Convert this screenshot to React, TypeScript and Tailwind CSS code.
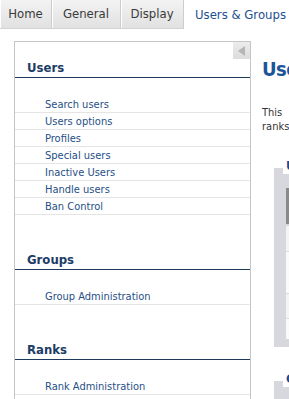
import React from "react";

const FONT = "font-['DejaVu_Sans_Condensed','DejaVu_Sans',sans-serif] font-stretch-condensed";

function Section({ title, items, first }: { title: string; items: string[]; first?: boolean }) {
  return (
    <div className={first ? "" : "mt-[19px]"}>
      <div className="pl-[12px] pt-[18px] pb-[1px] leading-[16px] border-b border-[#1e3a5a] text-[13px] font-bold text-[#1d3c66]">
        {title}
      </div>
      <div className="mt-[18px]">
        {items.map((it) => (
          <div
            key={it}
            className="h-[17px] border-b border-[#e4e4e4] pl-[30px] pt-[2px] leading-[14px] text-[11px] text-[#1f4f86]"
          >
            {it}
          </div>
        ))}
      </div>
    </div>
  );
}

function Tab({ label, w }: { label: string; w: string }) {
  return (
    <div
      className={`${w} h-[29px] shrink-0 flex items-center justify-center border-r border-[#cdcdcd] border-b border-b-[#d2d2d2] bg-gradient-to-b from-[#f3f3f3] to-[#e1e1e1] text-[13px] text-[#3a3a3a] shadow-[inset_1px_0_0_#ffffff]`}
    >
      {label}
    </div>
  );
}

function FieldBox({ legend, children, className }: { legend: string; children?: React.ReactNode; className?: string }) {
  return (
    <div className={`flex flex-col ${className ?? ""}`}>
      <div className="ml-[9px] self-start relative z-10 bg-white px-[3px] text-[13px] font-bold leading-[16px] text-[#1d4a8a] whitespace-nowrap">
        {legend}
      </div>
      <div className="-mt-[6px] bg-[#d6d8dd] pl-[12px] pb-[8px]">{children}</div>
    </div>
  );
}

export default function App() {
  return (
    <div className={`w-[289px] h-[399px] overflow-hidden bg-white ${FONT}`}>
      <div className="flex h-[29px]">
        <Tab label="Home" w="w-[52px]" />
        <Tab label="General" w="w-[69px]" />
        <Tab label="Display" w="w-[63px]" />
        <div className="h-[29px] pl-[11px] flex items-center bg-white text-[13px] text-[#1d4f91] whitespace-nowrap w-[120px] shrink-0">
          Users &amp; Groups
        </div>
      </div>
      <div className="flex">
        <div className="ml-[14px] mt-[12px] w-[237px] shrink-0 border border-[#c6c6c6] relative pb-[40px]">
          <div className="absolute top-0 right-0 w-[17px] h-[17px] bg-gradient-to-b from-[#ececec] to-[#dcdcdc] flex items-center justify-center">
            <svg width="8" height="10" viewBox="0 0 8 10">
              <polygon points="7,0 7,10 0,5" fill="#b5b5b5" />
            </svg>
          </div>
          <Section
            first
            title="Users"
            items={["Search users", "Users options", "Profiles", "Special users", "Inactive Users", "Handle users", "Ban Control"]}
          />
          <Section title="Groups" items={["Group Administration"]} />
          <Section title="Ranks" items={["Rank Administration"]} />
        </div>
        <div className="ml-[11px] w-[420px] shrink-0 flex flex-col">
          <div className="mt-[28px] text-[20px] font-bold leading-[24px] text-[#1c5599] whitespace-nowrap tracking-[-0.5px]">
            Users &amp; Groups
          </div>
          <div className="mt-[25px] text-[11px] leading-[14px] text-[#333333] whitespace-nowrap [word-spacing:8px]">
            This section lets you manage the users, groups and
            <br />
            ranks of your forum.
          </div>
          <FieldBox legend="Users" className="ml-[12px] mt-[24px]">
            <div className="pt-[20px]">
              <div className="h-[36px] bg-[#8a8a8a]" />
              <div className="mt-[2px] h-[26px] bg-[#f4f4f5] border-b border-[#dcdcdc]" />
              <div className="h-[42px] bg-[#fafafa] border-b border-[#dcdcdc]" />
              <div className="h-[25px] bg-[#f4f4f5] border-b border-[#dcdcdc]" />
              <div className="h-[20px] bg-[#fafafa]" />
            </div>
          </FieldBox>
          <FieldBox legend="Groups" className="ml-[12px] mt-[24px]">
            <div className="h-[60px]" />
          </FieldBox>
        </div>
      </div>
    </div>
  );
}
